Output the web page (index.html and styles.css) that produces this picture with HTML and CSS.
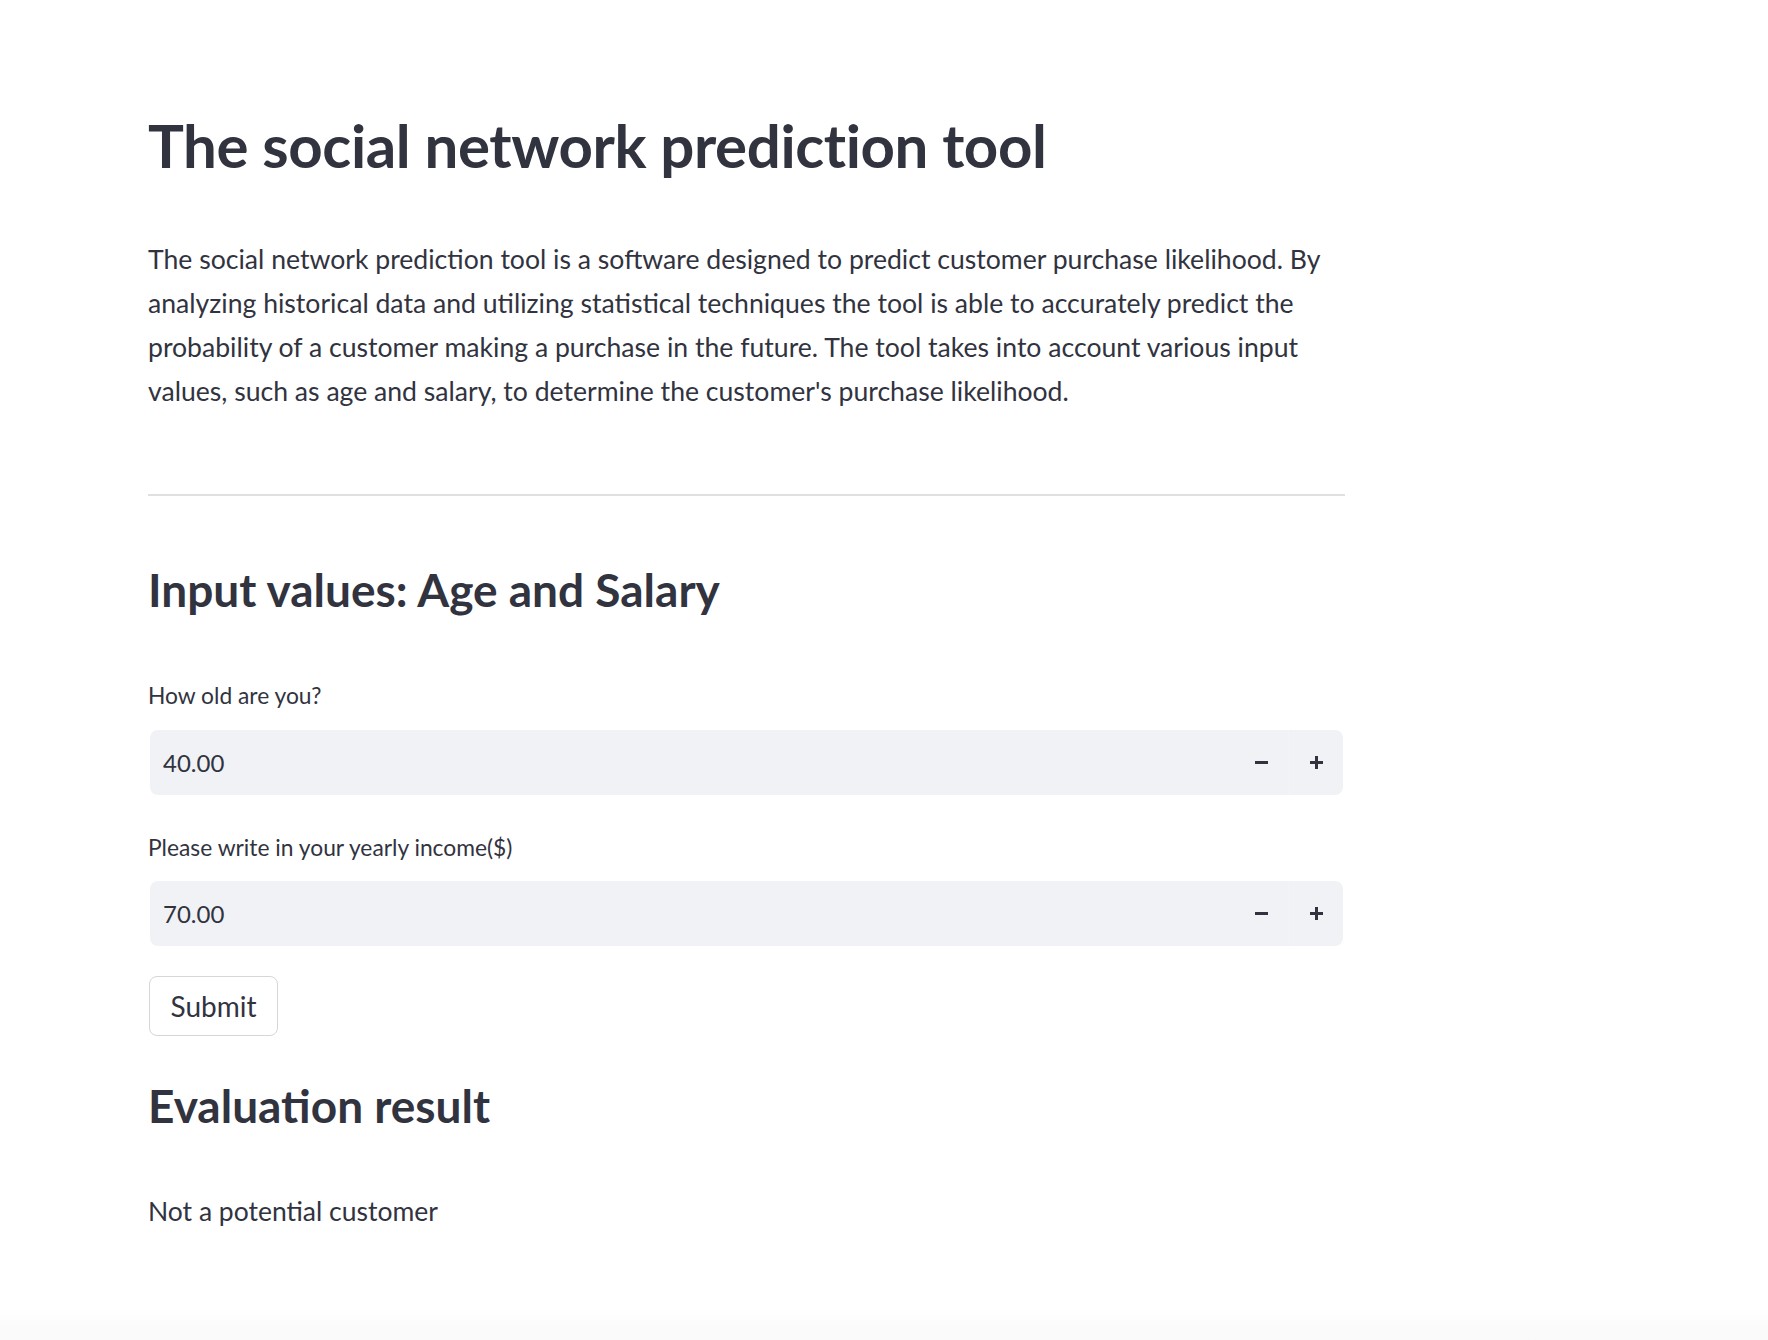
FILE: index.html
```html
<!DOCTYPE html>
<html lang="en">
<head>
<meta charset="utf-8">
<title>The social network prediction tool</title>
<link rel="stylesheet" href="styles.css">
</head>
<body>
<main class="main">
  <h1 class="title">The social network prediction tool</h1>
  <p class="intro">The social network prediction tool is a software designed to predict customer purchase likelihood. By analyzing historical data and utilizing statistical techniques the tool is able to accurately predict the probability of a customer making a purchase in the future. The tool takes into account various input values, such as age and salary, to determine the customer's purchase likelihood.</p>
  <hr class="divider">
  <h3 class="subheader sub-input">Input values: Age and Salary</h3>
  <div class="field">
    <label class="field-label">How old are you?</label>
    <div class="number-input">
      <span class="number-value">40.00</span>
      <span class="step step-minus"><svg width="13" height="13" viewBox="0 0 13 13"><rect x="0" y="5" width="13" height="3" fill="#31333F"/></svg></span>
      <span class="step step-plus"><svg width="13" height="13" viewBox="0 0 13 13"><rect x="0" y="5" width="13" height="3" fill="#31333F"/><rect x="5" y="0" width="3" height="13" fill="#31333F"/></svg></span>
    </div>
  </div>
  <div class="field field-2">
    <label class="field-label">Please write in your yearly income($)</label>
    <div class="number-input">
      <span class="number-value">70.00</span>
      <span class="step step-minus"><svg width="13" height="13" viewBox="0 0 13 13"><rect x="0" y="5" width="13" height="3" fill="#31333F"/></svg></span>
      <span class="step step-plus"><svg width="13" height="13" viewBox="0 0 13 13"><rect x="0" y="5" width="13" height="3" fill="#31333F"/><rect x="5" y="0" width="3" height="13" fill="#31333F"/></svg></span>
    </div>
  </div>
  <button class="submit" type="button">Submit</button>
  <h3 class="subheader sub-eval">Evaluation result</h3>
  <p class="result">Not a potential customer</p>
</main>
<div class="bottom-fade"></div>
</body>
</html>
```

FILE: styles.css
```css
html, body {
  margin: 0;
  padding: 0;
  background: #ffffff;
}
body {
  font-family: Lato, "Noto Sans", "Liberation Sans", sans-serif;
  color: #31333F;
}
.main {
  display: flex;
  flex-direction: column;
  align-items: flex-start;
  width: 1197px;
  padding: 109px 0 120px 148px;
}
.title {
  margin: 0;
  font-size: 60px;
  line-height: 72px;
  font-weight: 700;
  letter-spacing: -0.4px;
}
.intro {
  margin: 56px 0 0 0;
  font-size: 26.6px;
  line-height: 44px;
  width: 1197px;
}
.divider {
  align-self: stretch;
  margin: 81px 0 0 0;
  border: none;
  height: 2px;
  background: #e0e0e2;
}
.subheader {
  margin: 0;
  font-size: 46px;
  line-height: 50px;
  font-weight: 700;
}
.sub-input {
  margin-top: 69px;
}
.field {
  display: flex;
  flex-direction: column;
  align-self: stretch;
  margin-top: 66px;
}
.field-2 {
  margin-top: 38px;
}
.field-label {
  font-size: 22.8px;
  line-height: 28px;
  margin-bottom: 21px;
}
.field-2 .field-label {
  margin-bottom: 20px;
}
.number-input {
  display: flex;
  align-items: stretch;
  height: 65px;
  margin-left: 2px;
  margin-right: 2px;
  background: #F0F2F6;
  border-radius: 8px;
}
.number-value {
  flex: 1;
  display: flex;
  align-items: center;
  padding-left: 13px;
  font-size: 24px;
}
.step {
  width: 54px;
  display: flex;
  align-items: center;
  justify-content: center;
}
.step-plus {
  border-left: 1px solid #f3f4f8;
}
.submit {
  margin-top: 30px;
  margin-left: 1px;
  width: 129px;
  height: 60px;
  padding: 0;
  background: #ffffff;
  border: 1px solid #d5d6d9;
  border-radius: 8px;
  font-family: inherit;
  font-size: 28px;
  color: #31333F;
}
.sub-eval {
  margin-top: 44px;
  line-height: 52px;
}
.result {
  margin: 57px 0 0 0;
  font-size: 26.5px;
  line-height: 44px;
}
.bottom-fade {
  position: fixed;
  left: 0;
  right: 0;
  bottom: 0;
  height: 34px;
  background: linear-gradient(rgba(250,250,250,0), #f9f9f9);
}
```
